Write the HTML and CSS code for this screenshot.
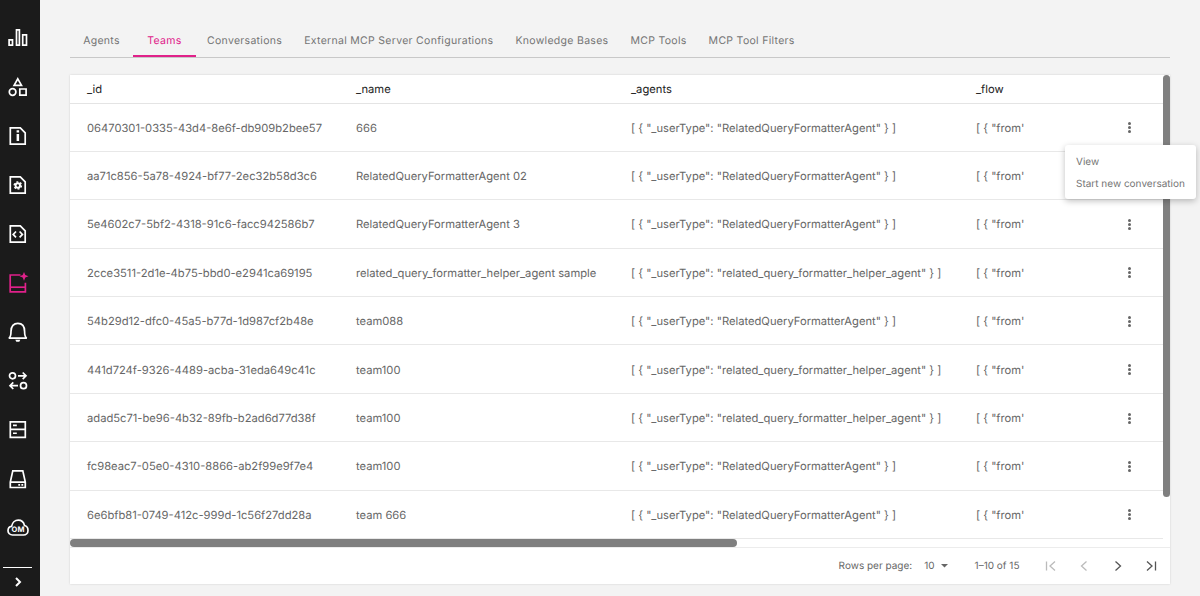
FILE: index.html
```html
<!DOCTYPE html>
<html lang="en">
<head>
    <meta charset="UTF-8">
    <title>Teams</title>
    <link rel="stylesheet" href="styles.css">
</head>
<body>
<nav class="sidebar">
    <ul class="nav-items">
        <li><svg viewBox="0 0 22 22"><path d="M2.100 12.800h3.400v5.400H2.100zM9.500 2.800h2.900v15.400H9.500zM15.700 7.800h3.800v10.400h-3.800z"/></svg></li>
        <li><svg viewBox="0 0 22 22"><path d="M10.800 2.800l3.700 6.600H7.100z"/><circle cx="5.600" cy="16" r="3.300"/><path d="M12.800 13h6.300v6.100h-6.300z"/></svg></li>
        <li><svg viewBox="0 0 22 22"><path d="M3.300 2.900h10l4.900 4.900v11.300H3.300z"/><path class="fill" d="M9.600 9h2.500v7H9.600zM9.600 5.200h2.500v2.300H9.600z"/></svg></li>
        <li><svg viewBox="0 0 22 22"><path d="M3.300 2.900h10l4.900 4.900v11.300H3.300z"/><circle class="teeth" cx="10.800" cy="11.500" r="3.600"/><circle class="fill" cx="10.800" cy="11.500" r="3.200"/><circle class="hole" cx="10.800" cy="11.500" r="1.200"/></svg></li>
        <li><svg viewBox="0 0 22 22"><path d="M3.300 2.900h10l4.900 4.900v11.300H3.300z"/><path d="M9 8.500l-2.800 2.900L9 14.300M12.600 8.500l2.800 2.900-2.800 2.900"/></svg></li>
        <li class="active"><svg viewBox="0 0 22 22"><path d="M13.500 3H3.200v16.800h15.200v-9"/><path d="M3.200 15.200h15.200"/><path class="fill" d="M17 0l1.300 3L21.500 4.300l-3.200 1.300L17 8.800l-1.300-3.200L12.500 4.300l3.200-1.300z"/></svg></li>
        <li><svg viewBox="0 0 22 22"><path d="M1.800 17.200c1.700-.8 2.200-2.400 2.200-6.700C4 5.200 6.800 2.300 10.800 2.300s6.800 2.900 6.800 8.200c0 4.300.5 5.900 2.200 6.700z"/><path class="fill" d="M8.300 18.800h5l-1 1.900h-3z"/></svg></li>
        <li><svg viewBox="0 0 22 22"><circle cx="5.500" cy="5.800" r="3"/><path d="M11 5.800h8M15.700 2.500l3.300 3.300-3.300 3.300"/><circle cx="16.500" cy="15.700" r="3"/><path d="M11 15.700H3M6.300 12.400L3 15.700 6.300 19"/></svg></li>
        <li><svg viewBox="0 0 22 22"><path d="M3.300 2.800h15v7.600h-15zM3.300 10.400h15v8h-15z"/><path class="fill" d="M6 5.600h3.800v1.600H6zM6 13.400h3.800v1.600H6z"/></svg></li>
        <li><svg viewBox="0 0 22 22"><path d="M5.800 2.800h10l2.500 11.200v5.500h-15V14zM3.300 14.200h15"/><path class="fill" d="M11.300 16h1.800v1.800h-1.800zM14.400 16h1.800v1.800h-1.800z"/></svg></li>
        <li><svg viewBox="0 0 22 22"><path d="M5.500 18C3 18 1 16.100 1 13.700c0-2.200 1.500-4 3.600-4.300C5.200 5.800 8 3.200 11.300 3.200c3 0 5.400 2.100 6.200 5.300 2.100.5 3.500 2.500 3.500 4.900 0 2.600-1.900 4.600-4.500 4.600z"/><text x="11" y="14.800">OM</text></svg></li>
    </ul>
    <div class="nav-bottom">
        <svg viewBox="0 0 12 12"><path d="M4 2l4 4-4 4"/></svg>
    </div>
</nav>

<main class="content">
    <div class="tabs">
        <span class="tab">Agents</span>
        <span class="tab selected">Teams</span>
        <span class="tab">Conversations</span>
        <span class="tab">External MCP Server Configurations</span>
        <span class="tab">Knowledge Bases</span>
        <span class="tab">MCP Tools</span>
        <span class="tab">MCP Tool Filters</span>
    </div>

    <section class="card">
        <div class="table-wrap">
            <table>
                <thead>
                    <tr><th class="col-id">_id</th><th class="col-name">_name</th><th class="col-agents">_agents</th><th class="col-flow">_flow</th><th class="col-more"></th></tr>
                </thead>
                <tbody>
                    <tr><td>06470301-0335-43d4-8e6f-db909b2bee57</td><td>666</td><td>[ { "_userType": "RelatedQueryFormatterAgent" } ]</td><td>[ { "from'</td><td class="more"><i></i><i></i><i></i></td></tr>
                    <tr><td>aa71c856-5a78-4924-bf77-2ec32b58d3c6</td><td>RelatedQueryFormatterAgent 02</td><td>[ { "_userType": "RelatedQueryFormatterAgent" } ]</td><td>[ { "from'</td><td class="more"></td></tr>
                    <tr><td>5e4602c7-5bf2-4318-91c6-facc942586b7</td><td>RelatedQueryFormatterAgent 3</td><td>[ { "_userType": "RelatedQueryFormatterAgent" } ]</td><td>[ { "from'</td><td class="more"><i></i><i></i><i></i></td></tr>
                    <tr><td>2cce3511-2d1e-4b75-bbd0-e2941ca69195</td><td>related_query_formatter_helper_agent sample</td><td>[ { "_userType": "related_query_formatter_helper_agent" } ]</td><td>[ { "from'</td><td class="more"><i></i><i></i><i></i></td></tr>
                    <tr><td>54b29d12-dfc0-45a5-b77d-1d987cf2b48e</td><td>team088</td><td>[ { "_userType": "RelatedQueryFormatterAgent" } ]</td><td>[ { "from'</td><td class="more"><i></i><i></i><i></i></td></tr>
                    <tr><td>441d724f-9326-4489-acba-31eda649c41c</td><td>team100</td><td>[ { "_userType": "related_query_formatter_helper_agent" } ]</td><td>[ { "from'</td><td class="more"><i></i><i></i><i></i></td></tr>
                    <tr><td>adad5c71-be96-4b32-89fb-b2ad6d77d38f</td><td>team100</td><td>[ { "_userType": "related_query_formatter_helper_agent" } ]</td><td>[ { "from'</td><td class="more"><i></i><i></i><i></i></td></tr>
                    <tr><td>fc98eac7-05e0-4310-8866-ab2f99e9f7e4</td><td>team100</td><td>[ { "_userType": "RelatedQueryFormatterAgent" } ]</td><td>[ { "from'</td><td class="more"><i></i><i></i><i></i></td></tr>
                    <tr><td>6e6bfb81-0749-412c-999d-1c56f27dd28a</td><td>team 666</td><td>[ { "_userType": "RelatedQueryFormatterAgent" } ]</td><td>[ { "from'</td><td class="more"><i></i><i></i><i></i></td></tr>
                </tbody>
            </table>
            <div class="scroll-v"></div>
            <div class="scroll-track"><div class="scroll-h"></div></div>
        </div>
        <div class="pager">
            <span>Rows per page:</span>
            <span class="per-page">10 <svg viewBox="0 0 8 4"><path d="M0 0h8L4 4z"/></svg></span>
            <span class="range">1–10 of 15</span>
            <div class="pager-btns">
                <svg class="off" viewBox="0 0 14 14"><path d="M2.500 2.500v9M11 2.500L6 7l5 4.500"/></svg>
                <svg class="off" viewBox="0 0 14 14"><path d="M9.500 2.500L4.500 7l5 4.500"/></svg>
                <svg viewBox="0 0 14 14"><path d="M4.500 2.500L9.500 7l-5 4.500"/></svg>
                <svg viewBox="0 0 14 14"><path d="M3 2.500L8 7l-5 4.500M11.500 2.500v9"/></svg>
            </div>
        </div>
    </section>
</main>

<ul class="menu">
    <li>View</li>
    <li>Start new conversation</li>
</ul>
</body>
</html>
```

FILE: styles.css
```css
*{
    margin: 0;
    padding: 0;
    box-sizing: border-box;
}
html, body{
    height: 100%;
    overflow: hidden;
}
body{
    display: flex;
    background: #f3f3f3;
    font-family: Inter, "Liberation Sans", sans-serif;
    font-size: 11.200px;
    color: #666;
    text-rendering: geometricPrecision;
}
.sidebar{
    width: 40px;
    height: 596px;
    background: #1b1b1b;
    flex-shrink: 0;
    display: flex;
    flex-direction: column;
    justify-content: space-between;
}
.nav-items{
    list-style: none;
    padding-top: 13px;
}
.nav-items li{
    height: 49px;
    display: flex;
    align-items: center;
    justify-content: center;
    padding-right: 4px;
}
.nav-items svg{
    width: 22px;
    height: 22px;
    fill: none;
    stroke: #fff;
    stroke-width: 1.700;
}
.nav-items .fill{
    fill: #fff;
    stroke: none;
}
.nav-items .teeth{
    stroke-width: 1.500;
    stroke-dasharray: 1.900 1.870;
}
.nav-items .hole{
    fill: #1b1b1b;
    stroke: none;
}
.nav-items text{
    fill: #fff;
    stroke: none;
    font-size: 7.500px;
    font-weight: 700;
    text-anchor: middle;
}
.nav-items .active svg{
    stroke: #e0218a;
}
.nav-items .active .fill{
    fill: #e0218a;
}
.nav-bottom{
    margin: 0 8px 0 3px;
    border-top: 1px solid #fff;
    height: 29px;
    display: flex;
    align-items: center;
    justify-content: center;
}
.nav-bottom svg{
    width: 12px;
    height: 12px;
    fill: none;
    stroke: #fff;
    stroke-width: 2;
}
.content{
    flex: 1;
    padding: 24px 30px 12px;
    display: flex;
    flex-direction: column;
    min-width: 0;
}
.tabs{
    display: flex;
    height: 34px;
    border-bottom: 1px solid #c8c8c8;
    flex-shrink: 0;
}
.tab{
    min-width: 63px;
    height: 33px;
    padding: 0 11px;
    display: flex;
    align-items: center;
    justify-content: center;
    font-size: 10.500px;
    letter-spacing: 0.3px;
    color: #757575;
}
.tab.selected{
    color: #e0218a;
    border-bottom: 2px solid #e0218a;
    padding-top: 2px;
}
.card{
    margin-top: 17px;
    flex: 1;
    background: #fff;
    box-shadow: 0 0 2px rgba(0,0,0,0.15);
    display: flex;
    flex-direction: column;
    min-height: 0;
}
.table-wrap{
    position: relative;
    height: 472px;
    overflow: hidden;
    flex-shrink: 0;
}
table{
    width: 1093px;
    border-collapse: collapse;
    table-layout: fixed;
}
.col-id{ width: 269px; }
.col-name{ width: 275px; }
.col-agents{ width: 345px; }
.col-flow{ width: 120px; }
th{
    height: 28px;
    padding: 1px 17px 0;
    text-align: left;
    font-weight: 400;
    color: #222;
    border-bottom: 1px solid #e4e4e4;
}
td{
    height: 48.4px;
    padding: 1px 17px 0;
    border-bottom: 1px solid #e8e8e8;
    white-space: nowrap;
    overflow: hidden;
}
td.more{
    text-align: center;
    padding: 1px 0 0 16px;
}
.more i{
    display: block;
    width: 3px;
    height: 3px;
    border-radius: 50%;
    background: #666;
    margin: 1px auto;
}
.scroll-v{
    position: absolute;
    top: 0;
    right: 0;
    width: 7px;
    height: 422px;
    border-radius: 4px;
    background: #7f7f7f;
}
.scroll-track{
    position: absolute;
    left: 0;
    right: 7px;
    top: 464px;
    height: 8px;
    background: #fff;
}
.scroll-h{
    width: 667px;
    height: 8px;
    border-radius: 4px;
    background: #7f7f7f;
}
.pager{
    flex: 1;
    border-top: 1px solid #ececec;
    display: flex;
    align-items: center;
    justify-content: flex-end;
    padding-right: 12px;
    font-size: 10px;
}
.per-page{
    margin-left: 12px;
    display: flex;
    align-items: center;
    gap: 6px;
}
.per-page svg{
    width: 7px;
    height: 3.500px;
    fill: #666;
}
.range{
    margin-left: 27px;
}
.pager-btns{
    margin-left: 24px;
    display: flex;
    gap: 19.500px;
}
.pager-btns svg{
    width: 14px;
    height: 14px;
    fill: none;
    stroke: #555;
    stroke-width: 1.300;
}
.pager-btns .off{
    stroke: #bbb;
}
.menu{
    list-style: none;
    position: absolute;
    left: 1065px;
    top: 145px;
    width: 131px;
    height: 54px;
    padding: 5px 11px;
    background: #fff;
    border-radius: 3px;
    box-shadow: 0 2px 6px rgba(0,0,0,0.25);
    font-size: 10px;
    color: #757575;
}
.menu li{
    height: 22px;
    line-height: 24px;
    white-space: nowrap;
}
```
